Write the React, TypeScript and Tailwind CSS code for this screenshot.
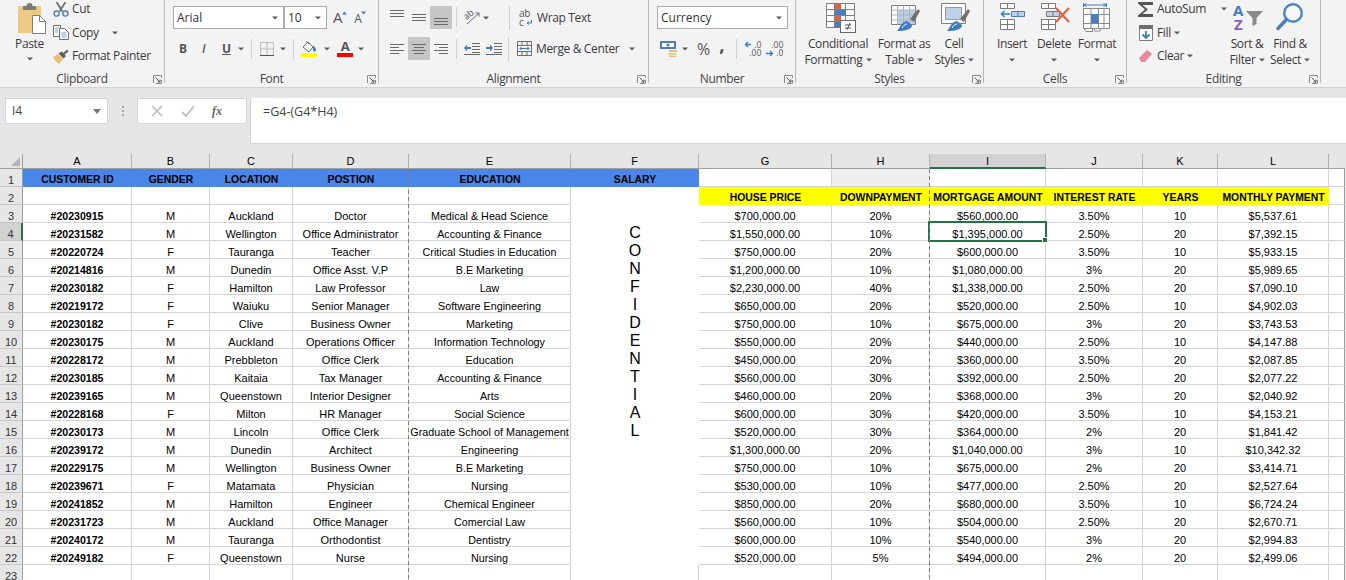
import React from "react";

const uiFont = "font-['Open_Sans',sans-serif]";

function Caret({ className = "" }: { className?: string }) {
  return (
    <svg width="6" height="4" viewBox="0 0 6 4" className={`shrink-0 ${className}`}>
      <path d="M0 0.5h6L3 3.5z" fill="#5a5a5a" />
    </svg>
  );
}

function Launcher() {
  return (
    <svg width="9" height="9" viewBox="0 0 9 9" className="absolute right-[2px] top-[75px]">
      <path d="M0.5 8V0.5H8.5V3M3 8.5H8.5V5" fill="none" stroke="#8a8a8a" />
      <path d="M2.5 2.5L7 7M7 4.5V7H4.5" fill="none" stroke="#555" />
    </svg>
  );
}

function Sep({ className = "" }: { className?: string }) {
  return <div className={`w-px h-[20px] bg-[#cfcfcf] shrink-0 ${className}`} />;
}

function Group({ width, label, children }: { width: string; label: string; children: React.ReactNode }) {
  return (
    <section className={`relative flex flex-col h-[83px] border-r border-[#b8b8b8] shrink-0 ${width}`}>
      <div className="h-[72px] shrink-0">{children}</div>
      <div className="h-[14px] shrink-0 leading-[14px] text-center text-[#444]">{label}</div>
      <Launcher />
    </section>
  );
}

// alignment glyph: stacked bars, three pixels apart
function Lines({ rows }: { rows: [number, number][] }) {
  return (
    <svg width="15" height={rows.length * 3} viewBox={`0 0 15 ${rows.length * 3}`} className="shrink-0 block">
      {rows.map(([x, w], i) => (
        <rect key={i} x={x} y={i * 3 + 1} width={w} height="1" fill="#6a6a6a" />
      ))}
    </svg>
  );
}

function PasteIcon() {
  return (
    <svg width="29" height="31" viewBox="0 0 29 31">
      <path d="M1 4a1 1 0 0 1 1-1h21a1 1 0 0 1 1 1v26H1z" fill="#eec982" />
      <path d="M6 3h3.5a3 3 0 0 1 6 0H19v4H6z" fill="#7b7b7b" />
      <path d="M15.5 12.5h7l6 6v12h-13z" fill="#fff" stroke="#7f7f7f" />
      <path d="M22.5 12.5v6h6" fill="none" stroke="#7f7f7f" />
    </svg>
  );
}

function CutIcon() {
  return (
    <svg width="16" height="15" viewBox="0 0 16 15" className="shrink-0">
      <path d="M3.5 0l6 9.5M12.5 0L6.5 9.5" stroke="#6e6e6e" strokeWidth="1.7" fill="none" />
      <circle cx="3.6" cy="11.6" r="2.6" fill="none" stroke="#3f7cbf" strokeWidth="1.3" />
      <circle cx="12.4" cy="11.6" r="2.6" fill="none" stroke="#3f7cbf" strokeWidth="1.3" />
    </svg>
  );
}

function CopyIcon() {
  return (
    <svg width="16" height="15" viewBox="0 0 16 15" className="shrink-0">
      <path d="M0.5 0.5h7v11h-7z" fill="#fff" stroke="#6f6f6f" />
      <path d="M6.5 3.5h5l4 4v7h-9z" fill="#fff" stroke="#6f6f6f" />
      <path d="M2 3h4M2 5h3M2 7h3M8.5 8h5M8.5 10h5M8.5 12h5" stroke="#7aa3cc" />
    </svg>
  );
}

function PainterIcon() {
  return (
    <svg width="17" height="15" viewBox="0 0 17 15" className="shrink-0">
      <path d="M0 8l5-3 5 5-4 5-2-2-1 0z" fill="#e9c07a" />
      <path d="M5.5 4.5l5 5 2.5-2.5-1.5-1.5 4-3-1.5-2-3.5 3.5-1.5-1.5z" fill="#5f5f5f" />
    </svg>
  );
}

function GrowFont({ big, up }: { big: boolean; up: boolean }) {
  return (
    <div className="flex items-start">
      <span className={`text-[#555] leading-none ${big ? "text-[15px]" : "text-[12px] mt-[3px]"}`}>A</span>
      <svg width="5" height="4" viewBox="0 0 5 4" className="mt-[1px]">
        <path d={up ? "M0 3.5h5L2.5 0.5z" : "M0 0.5h5L2.5 3.5z"} fill="#3f7cbf" />
      </svg>
    </div>
  );
}

function BorderIcon() {
  return (
    <svg width="14" height="14" viewBox="0 0 14 14" className="block">
      <path d="M0.5 0.5h13v13h-13zM7 0.5v13M0.5 7h13" fill="none" stroke="#8a8a8a" strokeDasharray="1 1" />
      <path d="M0 13.5h14" stroke="#555" />
    </svg>
  );
}

function FillIcon() {
  return (
    <svg width="17" height="17" viewBox="0 0 17 17" className="block">
      <path d="M2 7l5-5 5 5-4 5z" fill="#fff" stroke="#6a6a6a" />
      <path d="M5 1l3 3" stroke="#6a6a6a" />
      <path d="M12 5.5c2 1.5 3 3 3 4.5a1.4 1.4 0 0 1-3 0z" fill="#3f7cbf" />
      <rect x="0" y="13" width="16" height="4" fill="#ffff00" />
    </svg>
  );
}

function WrapIcon() {
  return (
    <svg width="14" height="17" viewBox="0 0 14 17" className="overflow-visible block">
      <text x="0" y="8" fontSize="10" fontFamily="'Open Sans',sans-serif" fill="#555">ab</text>
      <text x="0" y="17" fontSize="10" fontFamily="'Open Sans',sans-serif" fill="#555">c</text>
      <path d="M12.5 11v3h-4M10 12.5L8 14l2 1.5" fill="none" stroke="#3f7cbf" />
    </svg>
  );
}

function MergeIcon() {
  return (
    <svg width="15" height="15" viewBox="0 0 15 15" className="block">
      <path d="M0.5 0.5h14v14h-14zM0.5 4.5h14M0.5 10.5h14M5 0.5v4M10 0.5v4M5 10.5v4M10 10.5v4" fill="none" stroke="#6f6f6f" />
      <path d="M3 7.5h9M4.5 6L3 7.5 4.5 9M10.5 6L12 7.5 10.5 9" fill="none" stroke="#3f7cbf" />
    </svg>
  );
}

function OrientIcon() {
  return (
    <svg width="16" height="16" viewBox="0 0 16 16" className="overflow-visible block">
      <text x="1" y="9" fontSize="9" fontFamily="'Open Sans',sans-serif" fill="#555" transform="rotate(-40 5 8)">ab</text>
      <path d="M3 15L15 4M15 4h-3.5M15 4v3.5" fill="none" stroke="#666" />
    </svg>
  );
}

function IndentIcon({ flip }: { flip?: boolean }) {
  return (
    <svg width="16" height="12" viewBox="0 0 16 12" className="block">
      <path d="M8 0.5h8M8 3.5h8M8 6.5h8M8 9.5h8M0 11.5h16" stroke="#6a6a6a" fill="none" />
      {flip ? (
        <path d="M0 4h4V1.5L7 5 4 8.5V6H0z" fill="#3f7cbf" />
      ) : (
        <path d="M7 4H3V1.5L0 5l3 3.5V6h4z" fill="#3f7cbf" />
      )}
    </svg>
  );
}

function MoneyIcon() {
  return (
    <svg width="18" height="16" viewBox="0 0 18 16" className="block">
      <rect x="0" y="0" width="16" height="8" fill="#4a7ebb" />
      <rect x="2" y="2" width="12" height="4" fill="#fff" />
      <circle cx="8" cy="4" r="1.6" fill="#4a7ebb" />
      <path d="M9 9h8v2H9zM8 12h8v1.6H8zM9 14.4h7V16H9z" fill="#e9bf74" />
    </svg>
  );
}

function DecimalIcon({ increase }: { increase?: boolean }) {
  return (
    <div className="relative w-[17px] h-[16px] text-[8.5px] leading-[8px] tracking-normal text-[#555] shrink-0">
      <div className="flex justify-end h-[8px]">{increase ? ".0" : ".00"}</div>
      <div className="flex justify-end">{increase ? ".00" : ".0"}</div>
      <svg width="8" height="7" viewBox="0 0 8 7" className={`absolute left-0 ${increase ? "top-0" : "top-[9px]"}`}>
        {increase ? <path d="M7 3.5H1.5M4 1L1.5 3.5 4 6" fill="none" stroke="#3f7cbf" strokeWidth="1.3" /> : <path d="M0 3.5h6M4 1l2.5 2.5L4 6" fill="none" stroke="#3f7cbf" strokeWidth="1.3" />}
      </svg>
    </div>
  );
}

function CondIcon() {
  return (
    <svg width="31" height="31" viewBox="0 0 31 31">
      <path d="M0.5 0.5h28v24h-28zM0.5 6.5h28M0.5 12.5h28M0.5 18.5h28M8.5 0.5v24M19.5 0.5v24" fill="#fff" stroke="#7f7f7f" />
      <rect x="9" y="1" width="6" height="5" fill="#d9673d" />
      <rect x="9" y="7" width="11" height="5" fill="#4a7ebb" />
      <rect x="9" y="13" width="6" height="5" fill="#d9673d" />
      <rect x="9" y="19" width="6" height="5" fill="#4a7ebb" />
      <rect x="14.5" y="17.5" width="15" height="12" fill="#fff" stroke="#6a6a6a" />
      <path d="M19 22h6M19 25h6M24 20l-3 7" stroke="#555" fill="none" />
    </svg>
  );
}

function Brush() {
  return (
    <>
      <path d="M6 28c3-3 4-9 10-10l5 4c0 4-6 6-15 6z" fill="#3f7cbf" />
      <path d="M11 25c1-2 3-4 5-4" stroke="#fff" fill="none" />
      <path d="M19 16l8-10 2 2-6 11z" fill="#6f6f6f" />
    </>
  );
}

function TableStyleIcon() {
  return (
    <svg width="30" height="31" viewBox="0 0 30 31">
      <path d="M0.5 2.5h24v19h-24z" fill="#fff" stroke="#7f7f7f" />
      <rect x="6" y="7" width="18" height="14" fill="#bccde2" />
      <path d="M0.5 7h24M0.5 12h24M0.5 17h24M6.5 2.5v19M12.5 2.5v19M18.5 2.5v19" stroke="#a9b4c2" fill="none" />
      <Brush />
    </svg>
  );
}

function CellStyleIcon() {
  return (
    <svg width="30" height="31" viewBox="0 0 30 31">
      <path d="M0.5 0.5h24v20h-24z" fill="#fff" stroke="#7f7f7f" />
      <rect x="4.5" y="4.5" width="16" height="12" fill="#bcd2e8" stroke="#9a9a9a" />
      <Brush />
    </svg>
  );
}

function InsertIcon() {
  return (
    <svg width="27" height="28" viewBox="0 0 27 28">
      <path d="M1.5 0.5h14v5h-14zM8.5 0.5v5M1.5 16.5h14v10h-14zM1.5 21.5h14M8.5 16.5v10" fill="#fff" stroke="#7a7a7a" />
      <path d="M12.5 8.5h13v5h-13zM19 8.5v5" fill="#bcd2e8" stroke="#4a7ebb" />
      <path d="M2 11h9M5.5 8L2.5 11l3 3" fill="none" stroke="#3f7cbf" strokeWidth="1.5" />
    </svg>
  );
}

function DeleteIcon() {
  return (
    <svg width="30" height="28" viewBox="0 0 30 28">
      <path d="M1.5 0.5h14v5h-14zM8.5 0.5v5M1.5 16.5h14v10h-14zM1.5 21.5h14M8.5 16.5v10" fill="#fff" stroke="#7a7a7a" />
      <path d="M6.5 8.5h13v5h-13zM13 8.5v5" fill="#bcd2e8" stroke="#7a7a7a" />
      <path d="M16 5l13 14M29 5L16 19" stroke="#d9673d" strokeWidth="2.2" />
    </svg>
  );
}

function FormatIcon() {
  return (
    <svg width="28" height="31" viewBox="0 0 28 31">
      <path d="M0.5 0v4M23.5 0v4M1 2h22M3.5 0.5L1 2l2.5 1.5M20.5 0.5L23 2l-2.5 1.5" fill="none" stroke="#3f7cbf" />
      <path d="M0.5 5.5h26v20h-26zM0.5 11.5h26M0.5 20.5h26M8 5.5v20M15.5 5.5v20M21 5.5v20" fill="#fff" stroke="#8a8a8a" />
      <rect x="8" y="11" width="7.5" height="9.5" fill="#4a7ebb" />
      <path d="M1 25.5h8l1 3H3zM11 25.5h7l-1 2.5h-5z" fill="#fff" stroke="#8a8a8a" />
    </svg>
  );
}

function SortIcon() {
  return (
    <svg width="31" height="30" viewBox="0 0 31 30" className="overflow-visible">
      <text x="1" y="13" fontSize="15" fontWeight="700" fontFamily="'Open Sans',sans-serif" fill="#3f7cbf">A</text>
      <text x="2" y="27" fontSize="15" fontWeight="700" fontFamily="'Open Sans',sans-serif" fill="#8e5fb4">Z</text>
      <path d="M14 8h17l-6.5 7v6l-4 2v-8z" fill="#8a8a8a" />
    </svg>
  );
}

function FindIcon() {
  return (
    <svg width="28" height="30" viewBox="0 0 28 30">
      <circle cx="17" cy="10" r="8.8" fill="#fff" fillOpacity="0.4" stroke="#4a86c5" strokeWidth="2.4" />
      <path d="M10 17L2 25.5" stroke="#4a7ebb" strokeWidth="3.4" strokeLinecap="round" />
    </svg>
  );
}

function FillDownIcon() {
  return (
    <svg width="15" height="16" viewBox="0 0 15 16" className="shrink-0">
      <path d="M1.5 0.5h13v15h-13z" fill="#fff" stroke="#7f7f7f" />
      <rect x="1" y="0" width="14" height="4" fill="#6f6f6f" />
      <path d="M8 6v7M4.5 9.5L8 13l3.5-3.5" fill="none" stroke="#3f7cbf" strokeWidth="1.8" />
    </svg>
  );
}

function BigBtn({ width, icon, lines, className = "", iconClass = "" }: { width: string; icon: React.ReactNode; lines: string[]; className?: string; iconClass?: string }) {
  return (
    <div className={`flex flex-col items-center shrink-0 ${width} ${className}`}>
      <div className={`h-[36px] pt-[3px] flex justify-center ${iconClass}`}>{icon}</div>
      <div className="h-[16px] leading-[16px] whitespace-nowrap">{lines[0]}</div>
      <div className="h-[16px] leading-[16px] whitespace-nowrap flex items-center gap-[3px]">
        {lines[1]}
        <Caret />
      </div>
    </div>
  );
}

function Combo({ width, text }: { width: string; text: string }) {
  return (
    <div className={`flex items-center justify-between h-[23px] bg-white border border-[#ababab] pl-[3px] pr-[5px] text-[12px] tracking-normal text-[#333] ${width}`}>
      <span>{text}</span>
      <Caret />
    </div>
  );
}

function Ribbon() {
  return (
    <div className={`flex h-[88px] bg-[#f3f3f3] border-b border-[#d2d2d2] text-[12px] tracking-[-0.35px] text-[#3a3a3a] ${uiFont}`}>
      <Group width="w-[165px]" label="Clipboard">
        <div className="flex">
          <div className="flex flex-col items-center w-[53px] ml-[3px] pt-[3px]">
            <div className="ml-[3px]"><PasteIcon /></div>
            <div className="mt-[2px] leading-[16px]">Paste</div>
            <Caret className="mt-[5px]" />
          </div>
          <div className="flex flex-col ml-[-3px] pt-[2px] gap-[9.5px]">
            <div className="flex items-center h-[14px] gap-[3px]"><CutIcon /><span>Cut</span></div>
            <div className="flex items-center h-[14px] gap-[3px]"><CopyIcon /><span>Copy</span><Caret className="ml-[10px]" /></div>
            <div className="flex items-center h-[14px] gap-[2px]"><PainterIcon /><span>Format Painter</span></div>
          </div>
        </div>
      </Group>

      <Group width="w-[214px]" label="Font">
        <div className="flex flex-col pt-[6px] gap-[8px] pl-[8px]">
          <div className="flex items-center h-[23px]">
            <Combo width="w-[111px]" text="Arial" />
            <Combo width="w-[43px]" text="10" />
            <div className="ml-[6px]"><GrowFont big up /></div>
            <div className="ml-[7px]"><GrowFont big={false} up={false} /></div>
          </div>
          <div className="flex items-center h-[23px]">
            <span className="ml-[6px] w-[16px] font-bold text-[12px] text-[#555]">B</span>
            <span className="ml-[7px] w-[14px] italic font-semibold text-[12px] text-[#555]">I</span>
            <span className="ml-[6px] w-[14px] underline font-bold text-[12px] text-[#555]">U</span>
            <Caret className="ml-[2px]" />
            <Sep className="ml-[7px]" />
            <div className="ml-[8px]"><BorderIcon /></div>
            <Caret className="ml-[6px]" />
            <Sep className="ml-[7px]" />
            <div className="ml-[7px] h-[17px]"><FillIcon /></div>
            <Caret className="ml-[6px]" />
            <div className="ml-[7px] flex flex-col items-center w-[16px]">
              <span className="font-bold text-[13px] leading-[13px] text-[#555]">A</span>
              <span className="w-[16px] h-[4px] bg-[#ff0000]" />
            </div>
            <Caret className="ml-[5px]" />
          </div>
        </div>
      </Group>

      <Group width="w-[270px]" label="Alignment">
        <div className="flex flex-col pt-[6px] gap-[8px] pl-[11px]">
          <div className="flex items-start h-[23px]">
            <div className="pt-[3px] w-[15px]"><Lines rows={[[0, 14], [0, 14], [0, 14]]} /></div>
            <div className="ml-[7px] pt-[7px] w-[15px]"><Lines rows={[[0, 14], [0, 14], [0, 14]]} /></div>
            <div className="ml-[3px] pl-[4px] pt-[11px] w-[22px] h-[23px] bg-[#c6c6c6]"><Lines rows={[[0, 14], [0, 14], [0, 14]]} /></div>
            <Sep className="ml-[4px] mt-[1px]" />
            <div className="ml-[7px] mt-[3px]"><OrientIcon /></div>
            <Caret className="ml-[3px] mt-[10px]" />
            <Sep className="ml-[20px] h-[24px]" />
            <div className="ml-[9px] mt-[3px]"><WrapIcon /></div>
            <span className="ml-[4px] mt-[3px]">Wrap Text</span>
          </div>
          <div className="flex items-center h-[23px]">
            <Lines rows={[[0, 14], [0, 9], [0, 14], [0, 9]]} />
            <div className="ml-[3px] flex items-center justify-center w-[22px] h-[23px] bg-[#c6c6c6]"><Lines rows={[[0, 14], [2, 10], [0, 14], [2, 10]]} /></div>
            <div className="ml-[4px]"><Lines rows={[[0, 14], [5, 9], [0, 14], [5, 9]]} /></div>
            <Sep className="ml-[7px]" />
            <div className="ml-[7px]"><IndentIcon /></div>
            <div className="ml-[6px]"><IndentIcon flip /></div>
            <Sep className="ml-[6px] h-[24px]" />
            <div className="ml-[8px]"><MergeIcon /></div>
            <span className="ml-[4px]">Merge &amp; Center</span>
            <Caret className="ml-[10px]" />
          </div>
        </div>
      </Group>

      <Group width="w-[147px]" label="Number">
        <div className="flex flex-col pt-[6px] gap-[8px] pl-[8px]">
          <Combo width="w-[131px]" text="Currency" />
          <div className="flex items-center h-[23px] pl-[3px]">
            <MoneyIcon />
            <Caret className="ml-[4px]" />
            <span className="ml-[9px] text-[16px] tracking-normal text-[#555]">%</span>
            <span className="ml-[9px] mb-[10px] font-bold text-[19px] leading-[10px] text-[#555]">,</span>
            <Sep className="ml-[12px]" />
            <div className="ml-[7px]"><DecimalIcon increase /></div>
            <div className="ml-[5px]"><DecimalIcon /></div>
          </div>
        </div>
      </Group>

      <Group width="w-[188px]" label="Styles">
        <div className="flex pl-[12px]">
          <BigBtn width="w-[60px]" iconClass="ml-[6px]" icon={<CondIcon />} lines={["Conditional", "Formatting"]} />
          <BigBtn width="w-[50px]" className="ml-[11px]" iconClass="ml-[3px]" icon={<TableStyleIcon />} lines={["Format as", "Table"]} />
          <BigBtn width="w-[38px]" className="ml-[6px]" iconClass="ml-[3px]" icon={<CellStyleIcon />} lines={["Cell", "Styles"]} />
        </div>
      </Group>

      <Group width="w-[143px]" label="Cells">
        <div className="flex pl-[8px]">
          <BigBtn width="w-[40px]" icon={<InsertIcon />} lines={["Insert", ""]} />
          <BigBtn width="w-[40px]" className="ml-[2px]" iconClass="ml-[2px]" icon={<DeleteIcon />} lines={["Delete", ""]} />
          <BigBtn width="w-[40px]" className="ml-[3px]" icon={<FormatIcon />} lines={["Format", ""]} />
        </div>
      </Group>

      <Group width="w-[194px]" label="Editing">
        <div className="flex pl-[11px]">
          <div className="flex flex-col w-[89px] pt-[2px] gap-[9.5px]">
            <div className="flex items-center h-[14px]">
              <svg width="15" height="15" viewBox="0 0 15 15"><path d="M15 3V0H0v1.5L7 7.5 0 13.5V15h15v-3H4.5L10 7.5 4.5 3z" fill="#555" /></svg>
              <span className="ml-[4px]">AutoSum</span>
              <Caret className="ml-[15px]" />
            </div>
            <div className="flex items-center h-[14px]">
              <FillDownIcon />
              <span className="ml-[4px]">Fill</span>
              <Caret className="ml-[3px]" />
            </div>
            <div className="flex items-center h-[14px]">
              <svg width="15" height="14" viewBox="0 0 15 14"><path d="M1 9l8-8 5 4-7 8H3z" fill="#e88a9a" /></svg>
              <span className="ml-[4px]">Clear</span>
              <Caret className="ml-[3px]" />
            </div>
          </div>
          <BigBtn width="w-[40px]" icon={<SortIcon />} lines={["Sort &", "Filter"]} />
          <BigBtn width="w-[42px]" className="ml-[2px]" icon={<FindIcon />} lines={["Find &", "Select"]} />
        </div>
      </Group>
    </div>
  );
}

function FormulaBar() {
  return (
    <div className={`flex h-[66px] bg-[#e6e6e6] pt-[10px] pl-[5px] text-[12px] text-[#444] ${uiFont}`}>
      <div className="flex items-center justify-between w-[103px] h-[26px] bg-white border border-[#d4d4d4] pl-[6px] pr-[6px]">
        <span>I4</span>
        <svg width="8" height="5" viewBox="0 0 8 5"><path d="M0 0h8L4 5z" fill="#777" /></svg>
      </div>
      <div className="flex flex-col justify-center items-center gap-[2px] w-[29px] h-[26px]">
        <span className="w-[2px] h-[2px] bg-[#a8a8a8]" />
        <span className="w-[2px] h-[2px] bg-[#a8a8a8]" />
        <span className="w-[2px] h-[2px] bg-[#a8a8a8]" />
      </div>
      <div className="flex items-center w-[110px] h-[26px] bg-white border border-[#d4d4d4] mr-[3px]">
        <svg width="12" height="12" viewBox="0 0 12 12" className="ml-[13px]"><path d="M1 1l10 10M11 1L1 11" stroke="#bdbdbd" strokeWidth="1.6" /></svg>
        <svg width="14" height="12" viewBox="0 0 14 12" className="ml-[18px]"><path d="M1 7l4 4 8-10" fill="none" stroke="#bdbdbd" strokeWidth="1.8" /></svg>
        <span className="ml-[17px] font-['Liberation_Serif',serif] italic font-bold text-[12px] text-[#666]">fx</span>
      </div>
      <div className="flex-1 h-[46px] bg-white border-l border-b border-[#d4d4d4] pl-[12px] pt-[4px] text-[12.5px] leading-[20px]">=G4-(G4*H4)</div>
    </div>
  );
}

const columns = ["A", "B", "C", "D", "E", "F", "G", "H", "I", "J", "K", "L"];

const rows: string[][] = [
  ["#20230915", "M", "Auckland", "Doctor", "Medical & Head Science", "", "$700,000.00", "20%", "$560,000.00", "3.50%", "10", "$5,537.61"],
  ["#20231582", "M", "Wellington", "Office Administrator", "Accounting & Finance", "C", "$1,550,000.00", "10%", "$1,395,000.00", "2.50%", "20", "$7,392.15"],
  ["#20220724", "F", "Tauranga", "Teacher", "Critical Studies in Education", "O", "$750,000.00", "20%", "$600,000.00", "3.50%", "10", "$5,933.15"],
  ["#20214816", "M", "Dunedin", "Office Asst. V.P", "B.E Marketing", "N", "$1,200,000.00", "10%", "$1,080,000.00", "3%", "20", "$5,989.65"],
  ["#20230182", "F", "Hamilton", "Law Professor", "Law", "F", "$2,230,000.00", "40%", "$1,338,000.00", "2.50%", "20", "$7,090.10"],
  ["#20219172", "F", "Waiuku", "Senior Manager", "Software Engineering", "I", "$650,000.00", "20%", "$520,000.00", "2.50%", "10", "$4,902.03"],
  ["#20230182", "F", "Clive", "Business Owner", "Marketing", "D", "$750,000.00", "10%", "$675,000.00", "3%", "20", "$3,743.53"],
  ["#20230175", "M", "Auckland", "Operations Officer", "Information Technology", "E", "$550,000.00", "20%", "$440,000.00", "2.50%", "10", "$4,147.88"],
  ["#20228172", "M", "Prebbleton", "Office Clerk", "Education", "N", "$450,000.00", "20%", "$360,000.00", "3.50%", "20", "$2,087.85"],
  ["#20230185", "M", "Kaitaia", "Tax Manager", "Accounting & Finance", "T", "$560,000.00", "30%", "$392,000.00", "2.50%", "20", "$2,077.22"],
  ["#20239165", "M", "Queenstown", "Interior Designer", "Arts", "I", "$460,000.00", "20%", "$368,000.00", "3%", "20", "$2,040.92"],
  ["#20228168", "F", "Milton", "HR Manager", "Social Science", "A", "$600,000.00", "30%", "$420,000.00", "3.50%", "10", "$4,153.21"],
  ["#20230173", "M", "Lincoln", "Office Clerk", "Graduate School of Management", "L", "$520,000.00", "30%", "$364,000.00", "2%", "20", "$1,841.42"],
  ["#20239172", "M", "Dunedin", "Architect", "Engineering", "", "$1,300,000.00", "20%", "$1,040,000.00", "3%", "10", "$10,342.32"],
  ["#20229175", "M", "Wellington", "Business Owner", "B.E Marketing", "", "$750,000.00", "10%", "$675,000.00", "2%", "20", "$3,414.71"],
  ["#20239671", "F", "Matamata", "Physician", "Nursing", "", "$530,000.00", "10%", "$477,000.00", "2.50%", "20", "$2,527.64"],
  ["#20241852", "M", "Hamilton", "Engineer", "Chemical Engineer", "", "$850,000.00", "20%", "$680,000.00", "3.50%", "10", "$6,724.24"],
  ["#20231723", "M", "Auckland", "Office Manager", "Comercial Law", "", "$560,000.00", "10%", "$504,000.00", "2.50%", "20", "$2,670.71"],
  ["#20240172", "M", "Tauranga", "Orthodontist", "Dentistry", "", "$600,000.00", "10%", "$540,000.00", "3%", "20", "$2,994.83"],
  ["#20249182", "F", "Queenstown", "Nurse", "Nursing", "", "$520,000.00", "5%", "$494,000.00", "2%", "20", "$2,499.06"],
];

const blueHeads = ["CUSTOMER ID", "GENDER", "LOCATION", "POSTION", "EDUCATION", "SALARY"];
const yellowHeads = ["HOUSE PRICE", "DOWNPAYMENT", "MORTGAGE AMOUNT", "INTEREST RATE", "YEARS", "MONTHLY PAYMENT"];

const cell = "flex items-end justify-center bg-white leading-[12px] whitespace-nowrap border-r border-b border-[#d4d4d4]";
const lastCell = "bg-white border-b border-b-[#d4d4d4] border-r border-r-[#9f9f9f]";
const rowHeadBase = "flex items-end justify-center leading-[12px] text-[#333] border-b border-b-[#c6c6c6]";
const rowHead = `${rowHeadBase} bg-[#e6e6e6] border-r border-r-[#9f9f9f]`;
const rowHeadActive = `${rowHeadBase} bg-[#d2d2d2] border-r-2 border-r-[#217346]`;
const headCell = "flex items-end justify-center pb-[1px] leading-[12px] font-bold text-[10.4px] whitespace-nowrap";
const breakLine = "absolute top-[15px] bottom-0 w-px bg-[repeating-linear-gradient(to_bottom,#7f7f7f_0_4px,transparent_4px_7px)]";

function Sheet() {
  return (
    <div className="relative grid grid-cols-[23px_109px_78px_83px_116px_162px_128px_133px_98px_116px_97px_75px_111px_16px_1px] grid-rows-[15px] auto-rows-[18px] h-[426px] overflow-hidden bg-[#e6e6e6] text-[11px] text-black font-['Liberation_Sans',Arial,sans-serif]">
      {/* column headers */}
      <div className="flex items-end justify-end bg-[#e6e6e6] border-r border-b border-[#9f9f9f] pr-[2px] pb-[2px]">
        <svg width="9" height="9" viewBox="0 0 9 9"><path d="M9 0v9H0z" fill="#b5b5b5" /></svg>
      </div>
      {columns.map((c) => (
        <div
          key={c}
          className={`flex items-center justify-center pt-[1px] border-r border-[#b0b0b0] ${c === "I" ? "bg-[#d2d2d2] border-b-2 border-b-[#217346]" : "bg-[#e6e6e6] border-b border-b-[#9f9f9f]"}`}
        >
          {c}
        </div>
      ))}
      <div className="bg-[#e6e6e6] border-b border-[#9f9f9f]" />
      <div />

      {/* row 1 */}
      <div className={rowHead}>1</div>
      {blueHeads.map((h) => (
        <div key={h} className={`${headCell} bg-[#4a86e8]`}>{h}</div>
      ))}
      <div className={cell} />
      <div className="bg-[#eeeeee] border-b border-[#d4d4d4]" />
      <div className={cell} />
      <div className={cell} />
      <div className={cell} />
      <div className={cell} />
      <div className={lastCell} />
      <div />

      {/* row 2 */}
      <div className={rowHead}>2</div>
      {blueHeads.slice(0, 5).map((h) => (
        <div key={h} className={cell} />
      ))}
      <div className="bg-white" />
      {yellowHeads.map((h) => (
        <div key={h} className={`${headCell} bg-[#ffff00]`}>{h}</div>
      ))}
      <div className={lastCell} />
      <div />

      {/* data rows 3 to 22 */}
      {rows.map((r, i) => (
        <React.Fragment key={i}>
          <div className={i === 1 ? rowHeadActive : rowHead}>{i + 3}</div>
          {r.map((v, j) =>
            j === 5 ? (
              <div key={j} className="flex items-end justify-center bg-white text-[16px] leading-[16px]">{v}</div>
            ) : (
              <div
                key={j}
                className={`${cell} ${j === 0 ? "font-bold text-[10.6px]" : ""} ${j === 4 ? "text-[10.75px]" : ""} ${i === 1 && j === 8 ? "relative" : ""}`}
              >
                {v}
                {i === 1 && j === 8 && (
                  <>
                    <div className="absolute inset-[-2px] border-2 border-[#217346]" />
                    <div className="absolute right-[-3px] bottom-[-3px] w-[6px] h-[6px] bg-[#217346] border border-white" />
                  </>
                )}
              </div>
            )
          )}
          <div className={lastCell} />
          <div />
        </React.Fragment>
      ))}

      {/* row 23 */}
      <div className={rowHead}>23</div>
      {columns.map((c) => (
        <div key={c} className="bg-white border-r border-[#d4d4d4]" />
      ))}
      <div className={lastCell} />
      <div />

      {/* page break lines */}
      <div className={`${breakLine} left-[408px]`} />
      <div className={`${breakLine} left-[929px]`} />
    </div>
  );
}

export default function App() {
  return (
    <div className="w-[1346px] h-[580px] overflow-hidden bg-white">
      <Ribbon />
      <FormulaBar />
      <Sheet />
    </div>
  );
}
